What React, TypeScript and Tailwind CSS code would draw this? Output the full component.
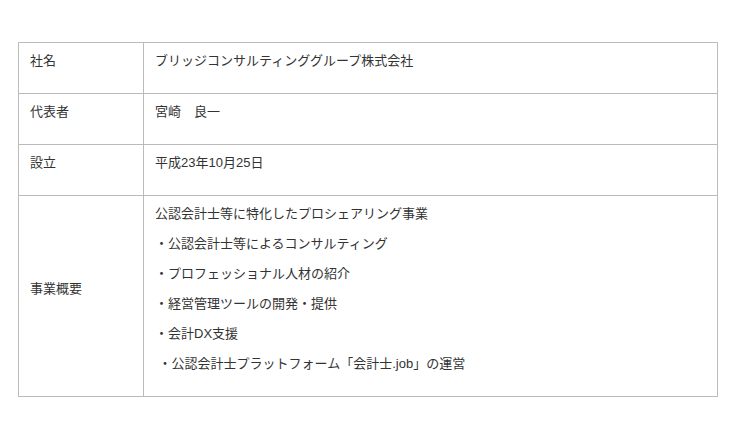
const rows: { label: string; lines: string[] }[] = [
  { label: "社名", lines: ["ブリッジコンサルティンググループ株式会社"] },
  { label: "代表者", lines: ["宮崎　良一"] },
  { label: "設立", lines: ["平成23年10月25日"] },
  {
    label: "事業概要",
    lines: [
      "公認会計士等に特化したプロシェアリング事業",
      "・公認会計士等によるコンサルティング",
      "・プロフェッショナル人材の紹介",
      "・経営管理ツールの開発・提供",
      "・会計DX支援",
      " ・公認会計士プラットフォーム「会計士.job」の運営",
    ],
  },
];

export default function App() {
  return (
    <div
      className="w-[740px] h-[437px] bg-white pt-[42px] pl-[18px] text-[13px] text-[#333]"
      style={{ fontFamily: '"Liberation Sans", "Noto Sans CJK JP", sans-serif' }}
    >
      <div className="w-[700px] grid grid-cols-[125px_1fr] border-t border-l border-[#bbb]">
        {rows.map((row) => (
          <div key={row.label} className="contents">
            {/* label cell is vertically centred, like a td */}
            <div className="border-r border-b border-[#bbb] pl-[11px] pt-[8px] pb-[12px] flex items-center">
              <p className="leading-[20px] mb-[10px]">{row.label}</p>
            </div>
            <div className="border-r border-b border-[#bbb] pl-[11px] pt-[8px] pb-[12px]">
              {row.lines.map((line, i) => (
                <p key={i} className="leading-[20px] mb-[10px] whitespace-pre">
                  {line}
                </p>
              ))}
            </div>
          </div>
        ))}
      </div>
    </div>
  );
}
